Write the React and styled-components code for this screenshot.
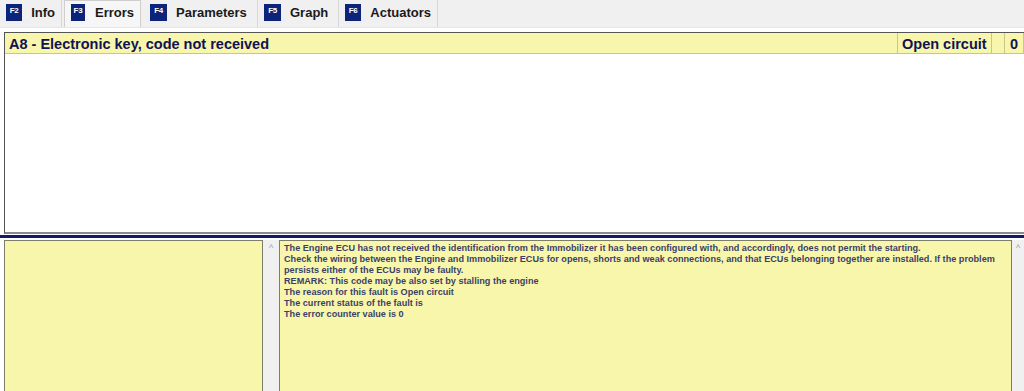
import React from "react";
import styled, { createGlobalStyle } from "styled-components";

const Global = createGlobalStyle`
  html, body { margin: 0; padding: 0; background: #ffffff; }
  body { font-family: "Liberation Sans", Arial, sans-serif; }
  * { box-sizing: border-box; }
`;

const Page = styled.div`
  width: 1024px;
  height: 391px;
  display: flex;
  flex-direction: column;
  overflow: hidden;
  background: #ffffff;
`;

const TabBar = styled.div`
  height: 28px;
  background: #f0f0f0;
  display: flex;
  align-items: stretch;
  border-bottom: 1px solid #e6e6e6;
`;

const Tab = styled.div`
  display: flex;
  align-items: center;
  gap: ${(p) => (p.$active ? "10px" : "9px")};
  padding: 0 6px 3px;
  border-right: 1px solid #d8d8d8;
  ${(p) =>
    p.$active &&
    `
    background: #f6f6f6;
    border: 1px solid #cfcfcf;
    border-bottom: none;
    margin: 0 3px 0 2px;
  `}
  font-weight: bold;
  font-size: 13px;
  color: #1a1a1a;
  width: ${(p) => p.$w}px;
`;

const Badge = styled.span`
  width: 17px;
  height: 17px;
  background: #0b2378;
  color: #ffffff;
  font-size: 8px;
  font-weight: bold;
  display: flex;
  align-items: flex-start;
  justify-content: center;
  padding-top: 2px;
  letter-spacing: -0.3px;
`;

const ErrorPanel = styled.div`
  margin: 4px 0 0 4px;
  height: 202px;
  border-left: 1px solid #555555;
  border-top: 1px solid #555555;
  border-bottom: 2px solid #8a8a8a;
  background: #ffffff;
  display: flex;
  flex-direction: column;
`;

const ErrorRow = styled.div`
  display: flex;
  height: 21px;
  background: #f8f6ac;
  border-bottom: 1px solid #c8c68a;
`;

const Cell = styled.div`
  flex: ${(p) => (p.$grow ? 1 : "none")};
  width: ${(p) => (p.$w ? `${p.$w}px` : "auto")};
  border-right: 1px solid #c8c68a;
  display: flex;
  align-items: center;
  padding-left: ${(p) => p.$pl || 4}px;
  padding-top: 1px;
  font-size: 14.5px;
  font-weight: bold;
  color: #101256;
  white-space: nowrap;
`;

const Divider = styled.div`
  height: 3px;
  background: #0e1c6e;
  margin-top: 1px;
`;

const Lower = styled.div`
  flex: 1;
  display: flex;
  margin-top: 2px;
  padding-left: 4px;
`;

const YellowBox = styled.div`
  background: #f8f6aa;
  border: 1px solid #7d7d6a;
  border-bottom: none;
  width: ${(p) => p.$w}px;
`;

const ScrollTrack = styled.div`
  width: ${(p) => p.$w}px;
  background: #f0f0f0;
  display: flex;
  justify-content: center;
  padding-top: 3px;
  color: #a0a0a0;
  font-size: 9px;
`;

const Details = styled(YellowBox)`
  padding: 2px 8px 0 4px;
  font-size: 9.15px;
  line-height: 11px;
  font-weight: bold;
  color: #3c3f6a;
`;

const Line = styled.div``;

const tabs = [
  { k: "F2", t: "Info", w: 62 },
  { k: "F3", t: "Errors", w: 77, active: true },
  { k: "F4", t: "Parameters", w: 114 },
  { k: "F5", t: "Graph", w: 81 },
  { k: "F6", t: "Actuators", w: 99 },
];

const lines = [
  "The Engine ECU has not received the identification from the Immobilizer it has been configured with, and accordingly, does not permit the starting.",
  "Check the wiring between the Engine and Immobilizer ECUs for opens, shorts and weak connections, and that ECUs belonging together are installed. If the problem persists either of the ECUs may be faulty.",
  "REMARK: This code may be also set by stalling the engine",
  "The reason for this fault is Open circuit",
  "The current status of the fault is",
  "The error counter value is 0",
];

export default function App() {
  return (
    <Page>
      <Global />
      <TabBar>
        {tabs.map((t) => (
          <Tab key={t.k} $active={t.active} $w={t.w}>
            <Badge>{t.k}</Badge>
            {t.t}
          </Tab>
        ))}
      </TabBar>
      <ErrorPanel>
        <ErrorRow>
          <Cell $grow>A8 - Electronic key, code not received</Cell>
          <Cell $w={94} $pl={4}>Open circuit</Cell>
          <Cell $w={13} />
          <Cell $w={19} $pl={5}>0</Cell>
        </ErrorRow>
      </ErrorPanel>
      <Divider />
      <Lower>
        <YellowBox $w={259} />
        <ScrollTrack $w={16}>^</ScrollTrack>
        <Details $w={733}>
          {lines.map((l, i) => (
            <Line key={i}>{l}</Line>
          ))}
        </Details>
        <ScrollTrack $w={12}>^</ScrollTrack>
      </Lower>
    </Page>
  );
}
